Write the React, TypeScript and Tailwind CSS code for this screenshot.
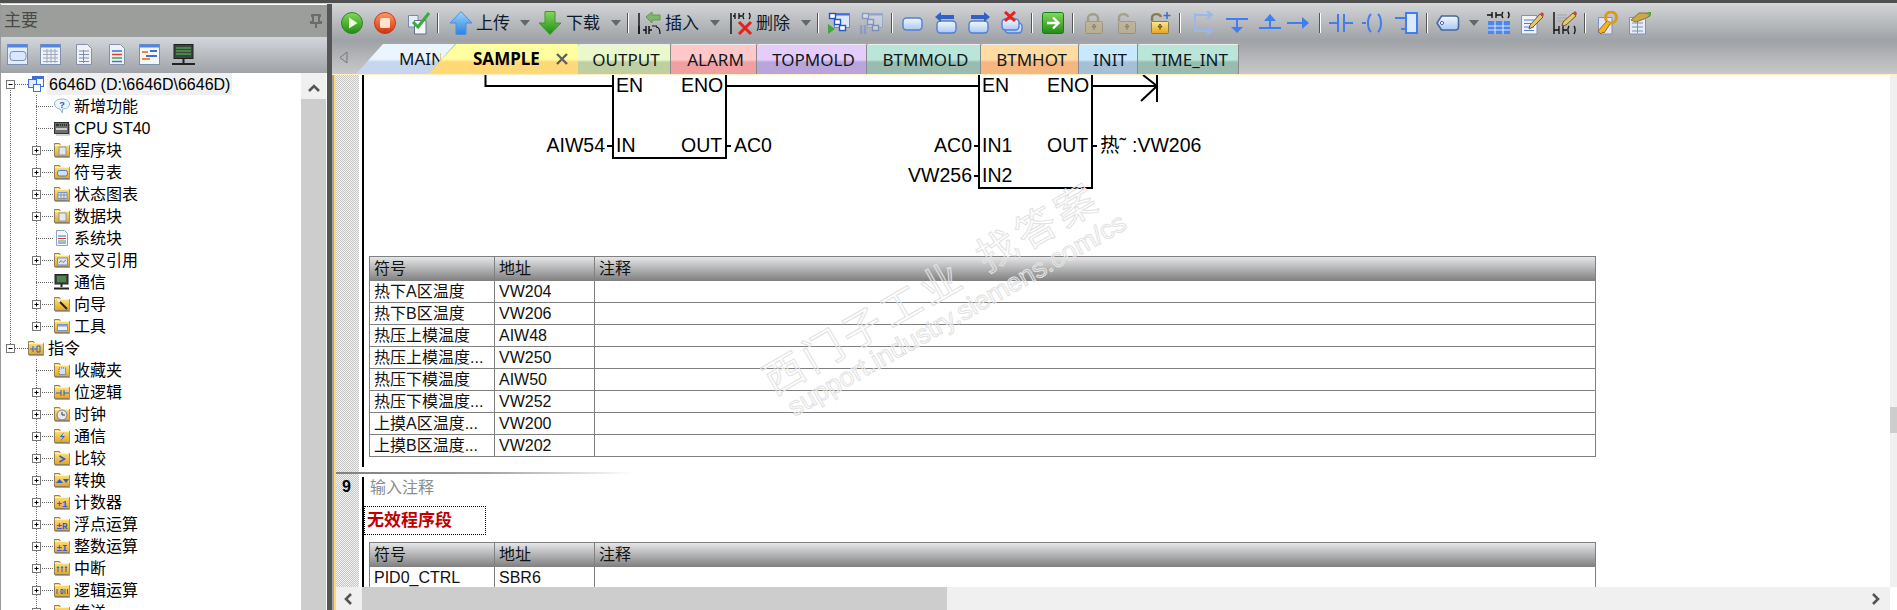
import type { ReactNode } from "react";

// shared svg gradients
function Defs() {
  return (
    <svg className="absolute size-0" aria-hidden="true">
      <defs>
        <linearGradient id="folder" x1="0" y1="0" x2="0" y2="1">
          <stop offset="0" stopColor="#ffe98a" />
          <stop offset="1" stopColor="#e5a51e" />
        </linearGradient>
        <linearGradient id="green" x1="0" y1="0" x2="0" y2="1">
          <stop offset="0" stopColor="#86d65c" />
          <stop offset="1" stopColor="#1f8d14" />
        </linearGradient>
        <linearGradient id="red" x1="0" y1="0" x2="0" y2="1">
          <stop offset="0" stopColor="#ff9a62" />
          <stop offset="1" stopColor="#d5300f" />
        </linearGradient>
        <linearGradient id="blue" x1="0" y1="0" x2="0" y2="1">
          <stop offset="0" stopColor="#9ad6ff" />
          <stop offset="1" stopColor="#2a82e2" />
        </linearGradient>
        <linearGradient id="pale" x1="0" y1="0" x2="0" y2="1">
          <stop offset="0" stopColor="#f3f8ff" />
          <stop offset="1" stopColor="#a9c8f4" />
        </linearGradient>
      </defs>
    </svg>
  );
}

function I({ children, w = 24, h = 24 }: { children: ReactNode; w?: number; h?: number }) {
  return (
    <svg width={w} height={h} viewBox={`0 0 ${w} ${h}`} fill="none" className="shrink-0">
      {children}
    </svg>
  );
}

/* ---------- tree icons ---------- */

function Folder({ children }: { children?: ReactNode }) {
  return (
    <I w={16} h={16}>
      <path d="M0.5 3.5V1.5H5.5L6.5 3.5H15.5V14.5H0.5Z" fill="url(#folder)" stroke="#8d7f5c" />
      <path d="M1 3.5H15" stroke="#fff4c4" />
      <path d="M1 15.5H16V4" stroke="#a8a8a0" />
      {children}
    </I>
  );
}

const glyph = (s: string) => (
  <text x="8" y="12.5" textAnchor="middle" fontSize="9" fontWeight="700" fill="#2b5fd8" fontFamily="Liberation Mono, monospace">
    {s}
  </text>
);

const Doc = () => (
  <I w={16} h={16}>
    <path d="M2.5 0.5H10.5L13.5 3.5V15.5H2.5Z" fill="#f4f7fc" stroke="#8fa3c6" />
    <path d="M4 6H12" stroke="#3d6fd8" />
    <path d="M4 8.5H12" stroke="#e03c30" />
    <path d="M4 11H12" stroke="#46a63c" />
    <path d="M4 13H12" stroke="#3d6fd8" />
  </I>
);

const Monitor = ({ w = 16 }: { w?: number }) => (
  <I w={w} h={16}>
    <rect x="1" y="0.5" width="13" height="9.5" fill="#3c4a40" stroke="#222" />
    <path d="M3 3H12M3 5H12M3 7H12" stroke="#5fc45c" />
    <path d="M7.5 10V13" stroke="#222" strokeWidth="2" />
    <path d="M0 14.5H15" stroke="#222" strokeWidth="2" />
  </I>
);

const tree: { label: string; level: 0 | 1; box?: boolean; icon: ReactNode }[] = [
  {
    label: "6646D (D:\\6646D\\6646D)",
    level: 0,
    box: true,
    icon: (
      <I w={16} h={16}>
        <rect x="4.5" y="0.5" width="11" height="10" fill="#fff" stroke="#3d6fd8" />
        <path d="M5 2H15" stroke="#3d6fd8" strokeWidth="2" />
        <rect x="0.5" y="3.5" width="8" height="8" fill="#e4edfb" stroke="#3d6fd8" />
        <rect x="5.5" y="8.5" width="7" height="7" fill="#fff" stroke="#3d6fd8" />
      </I>
    ),
  },
  {
    label: "新增功能",
    level: 1,
    icon: (
      <I w={16} h={16}>
        <path d="M8 1C3.5 1 0.5 3 0.5 6S3.5 11 6 11L8.5 15V11C12.5 11 15.5 9 15.5 6S12.5 1 8 1Z" fill="#eef6fb" stroke="#8fb8cc" />
        <text x="8" y="9.5" textAnchor="middle" fontSize="9" fontWeight="700" fill="#2b4fc0" fontFamily="Liberation Sans, sans-serif">?</text>
      </I>
    ),
  },
  {
    label: "CPU ST40",
    level: 1,
    icon: (
      <I w={16} h={16}>
        <rect x="0.5" y="2.5" width="14" height="11" fill="#6a6f6c" stroke="#333" />
        <path d="M2 5H13" stroke="#333" strokeWidth="2" />
        <path d="M5 5H12" stroke="#5fd05c" strokeDasharray="1 1" />
        <path d="M2 9H13" stroke="#ccc" strokeWidth="2" />
        <path d="M15.5 4V15H2" stroke="#aaa" />
      </I>
    ),
  },
  { label: "程序块", level: 1, box: true, icon: <Folder><rect x="5" y="5" width="7" height="8" fill="#dfe6f2" stroke="#8a97ad" /></Folder> },
  { label: "符号表", level: 1, box: true, icon: <Folder><rect x="3.5" y="6.5" width="10" height="5.5" rx="2" fill="#cfe0fa" stroke="#4f7bd0" /></Folder> },
  { label: "状态图表", level: 1, box: true, icon: <Folder><path d="M4 6.5H13V12.5H4ZM4 9H13M7 6.5V12.5M10 6.5V12.5" fill="#dfe6f2" stroke="#7f93b8" /></Folder> },
  { label: "数据块", level: 1, box: true, icon: <Folder><rect x="5" y="5" width="7" height="8" fill="#e4ebf6" stroke="#8a97ad" /></Folder> },
  { label: "系统块", level: 1, icon: <Doc /> },
  { label: "交叉引用", level: 1, box: true, icon: <Folder><rect x="3.5" y="6" width="10" height="7" fill="#dce6f8" stroke="#6f8fc8" /><path d="M5 11L7 8.5L9 10.5L12 8" stroke="#d0603c" /></Folder> },
  { label: "通信", level: 1, icon: <Monitor /> },
  { label: "向导", level: 1, box: true, icon: <Folder><path d="M3 3L13 13" stroke="#222" strokeWidth="2" /><path d="M3 3L6 6" stroke="#fff" strokeWidth="2" /></Folder> },
  { label: "工具", level: 1, box: true, icon: <Folder><rect x="3.5" y="6.5" width="10" height="6" fill="#eef2fa" stroke="#7f93b8" /><path d="M4 7.5H13" stroke="#7f9fe0" strokeWidth="2" /></Folder> },
  { label: "指令", level: 0, box: true, icon: <Folder><path d="M2 9H5M5 6V12M9 6V12H12V6H9M9 9H6" stroke="#2b5fd8" /></Folder> },
  { label: "收藏夹", level: 1, icon: <Folder><rect x="5" y="6" width="6.5" height="6.5" fill="#cfe0fa" stroke="#2b5fd8" strokeDasharray="1 1" /></Folder> },
  { label: "位逻辑", level: 1, box: true, icon: <Folder><path d="M2 9H7M7 6V12M10 6V12M10 9H15" stroke="#2b5fd8" /></Folder> },
  { label: "时钟", level: 1, box: true, icon: <Folder><circle cx="8" cy="9" r="5" fill="#e8e8f4" stroke="#7b7b90" /><path d="M8 6V9H11" stroke="#333" /></Folder> },
  { label: "通信", level: 1, box: true, icon: <Folder><path d="M10 4L6 9H9L6 14L11 8H8Z" fill="#2b5fd8" /></Folder> },
  { label: "比较", level: 1, box: true, icon: <Folder><path d="M5.5 6L10.5 9L5.5 12" stroke="#2b5fd8" strokeWidth="1.6" /></Folder> },
  { label: "转换", level: 1, box: true, icon: <Folder><path d="M2 11L5.5 7L9 11ZM9 7H15L12 11Z" fill="#2b5fd8" /></Folder> },
  { label: "计数器", level: 1, box: true, icon: <Folder>{glyph("+1")}</Folder> },
  { label: "浮点运算", level: 1, box: true, icon: <Folder>{glyph("±R")}</Folder> },
  { label: "整数运算", level: 1, box: true, icon: <Folder>{glyph("±I")}</Folder> },
  { label: "中断", level: 1, box: true, icon: <Folder><path d="M4 12V7M8 12V7M12 12V7M3 8L4 6.5L5 8M7 8L8 6.5L9 8M11 8L12 6.5L13 8" stroke="#2b5fd8" /></Folder> },
  { label: "逻辑运算", level: 1, box: true, icon: <Folder><path d="M3 7V12M7 7.5H9V11.5H7ZM11 7V12M13.5 7V12" stroke="#2b5fd8" /></Folder> },
  { label: "传送", level: 1, box: true, icon: <Folder /> },
];

// dotted connectors and the +/- box left of a tree row
function TreeLines({ index, level, box }: { index: number; level: 0 | 1; box?: boolean }) {
  const top = index > 11 ? 0 : index;
  const dots = { stroke: "#666", strokeDasharray: "1 1" };
  if (level === 0) {
    return (
      <svg width={27} height={22} className="shrink-0">
        <path d={index === 0 ? "M9.5 11V22" : "M9.5 0V11"} {...dots} />
        <path d="M14 11.5H27" {...dots} />
        <rect x="5.5" y="7.5" width="8" height="8" fill="#fff" stroke="#777" />
        <path d="M7.5 11.5H11.5" stroke="#000" />
      </svg>
    );
  }
  return (
    <svg width={53} height={22} className="shrink-0">
      {top > 0 && index < 12 && <path d="M9.5 0V22" {...dots} />}
      <path d={index === 11 ? "M35.5 0V11" : "M35.5 0V22"} {...dots} />
      <path d="M35 11.5H53" {...dots} />
      {box && (
        <>
          <rect x="31.5" y="7.5" width="8" height="8" fill="#fff" stroke="#777" />
          <path d="M33.5 11.5H37.5M35.5 9.5V13.5" stroke="#000" />
        </>
      )}
    </svg>
  );
}

function Chevron({ d }: { d: string }) {
  return (
    <svg width="12" height="12" viewBox="0 0 12 12" fill="none">
      <path d={d} stroke="#555" strokeWidth="2.6" />
    </svg>
  );
}

/* ---------- left panel ---------- */

function LeftPanel() {
  return (
    <aside className="flex h-[606px] w-[327px] shrink-0 flex-col border-l border-[#9a9a9a] bg-white">
      <div className="mt-px flex h-[32px] shrink-0 items-center justify-between bg-[#9c9e9b] pl-[3px] pr-[4px] text-[17px] text-[#4a4a48]">
        <span>主要</span>
        <svg width="14" height="16" viewBox="0 0 14 16" fill="none">
          <path d="M3 2H11V3H10V9H12V10H2V9H4V3H3ZM7 10V15" stroke="#6b6d6a" strokeWidth="2" />
        </svg>
      </div>
      <div className="flex h-[36px] shrink-0 items-center gap-[11px] bg-[linear-gradient(#d3d6da,#9fa3a8)] pl-[6px]">
        <I w={22} h={22}>
          <rect x="0.5" y="0.5" width="20" height="20" fill="#e4ecf8" stroke="#7d8fb0" />
          <path d="M1 2H20" stroke="#4f86e8" strokeWidth="3" />
          <rect x="3" y="7.5" width="16" height="9" rx="3" fill="#dbe8fb" stroke="#7590c0" />
        </I>
        <I w={22} h={22}>
          <rect x="0.5" y="0.5" width="20" height="20" fill="#eef2f8" stroke="#7d8fb0" />
          <path d="M1 2H20" stroke="#4f86e8" strokeWidth="3" />
          <path d="M3 7H18M3 10.5H18M3 14H18M3 17.5H18M7 5V19M11 5V19M15 5V19" stroke="#9aa7bd" />
        </I>
        <I w={22} h={22}>
          <path d="M3.5 0.5H14.5L18.5 4.5V20.5H3.5Z" fill="#eef2f8" stroke="#8292ad" />
          <path d="M6 7H16M6 10.5H16M6 14H16M6 17.5H16M10.5 6V19" stroke="#7f8ea8" />
        </I>
        <I w={22} h={22}>
          <path d="M3.5 0.5H14.5L18.5 4.5V20.5H3.5Z" fill="#eef2f8" stroke="#8292ad" />
          <path d="M6 7H16" stroke="#3d6fd8" strokeWidth="1.5" />
          <path d="M6 10.5H16" stroke="#e03c30" strokeWidth="1.5" />
          <path d="M6 14H16" stroke="#46a63c" strokeWidth="1.5" />
          <path d="M6 17.5H16" stroke="#3d6fd8" strokeWidth="1.5" />
        </I>
        <I w={22} h={22}>
          <rect x="0.5" y="0.5" width="20" height="20" fill="#f4f6fa" stroke="#7d8fb0" />
          <path d="M1 2H20" stroke="#4f86e8" strokeWidth="3" />
          <path d="M3 8H9M3 15H11" stroke="#f08a30" strokeWidth="2" />
          <path d="M11 7H18M7 12H18" stroke="#3d6fd8" strokeWidth="2" />
        </I>
        <I w={24} h={22}>
          <rect x="2" y="0.5" width="19" height="14" fill="#38463c" stroke="#1f1f1f" />
          <path d="M4 4H19M4 7H19M4 10H19" stroke="#5fc45c" />
          <path d="M11.5 15V19" stroke="#222" strokeWidth="2" />
          <path d="M0 20H23" stroke="#222" strokeWidth="2" />
        </I>
      </div>
      <div className="flex min-h-0 flex-1">
        <div className="w-[300px] overflow-hidden bg-white text-[16px] leading-[22px] text-black">
          {tree.map((row, i) => (
            <div key={i} className="flex h-[22px] items-center">
              <TreeLines index={i} level={row.level} box={row.box} />
              {row.icon}
              <span className={`h-[22px] whitespace-nowrap pt-px ${i === 0 ? "ml-[3px] bg-[#f0f0f0] px-[2px]" : "ml-[4px]"}`}>
                {row.label}
              </span>
            </div>
          ))}
        </div>
        <div className="flex w-[25px] flex-col bg-[#cdcdcd]">
          <div className="flex h-[26px] items-center justify-center bg-[#f0f0f0] pt-[4px]">
            <Chevron d="M1 9L6 4L11 9" />
          </div>
        </div>
      </div>
    </aside>
  );
}

/* ---------- toolbar icons ---------- */

const Sep = () => (
  <span className="flex h-[20px] w-[8px] shrink-0 justify-center">
    <span className="h-full w-[2px] border-l border-[#555] bg-white" />
  </span>
);

const Slot = ({ children }: { children: ReactNode }) => (
  <span className="flex w-[33px] shrink-0 justify-center">{children}</span>
);

const Caret = ({ className = "" }: { className?: string }) => (
  <svg width="10" height="6" viewBox="0 0 10 6" className={`shrink-0 ${className}`}>
    <path d="M0 0H10L5 6Z" fill="#666" />
  </svg>
);

const Lbl = ({ children, className = "" }: { children: ReactNode; className?: string }) => (
  <span className={`w-[34px] shrink-0 whitespace-nowrap text-[17px] leading-none text-[#0c1a30] ${className}`}>{children}</span>
);

const rect = (x: number, y: number, w = 19, h = 12) => (
  <rect x={x} y={y} width={w} height={h} rx="3.5" fill="url(#pale)" stroke="#4f7fd6" strokeWidth="1.4" />
);

const wire = "#3f7ef0";
const Run = ({ faded }: { faded?: boolean }) => (
  <I>
    <g opacity={faded ? 0.38 : 1}>
      <rect x="7.5" y="2.5" width="15" height="14" fill="#dce8fb" stroke="#5f8be0" />
      <path d="M8 3.5H22" stroke="#3d70dc" strokeWidth="2" />
      <rect x="2.5" y="2.5" width="6" height="5" fill="#fff" stroke="#2556c8" strokeWidth="1.4" />
      <rect x="7.5" y="8.5" width="6" height="5" fill="#fff" stroke="#2556c8" strokeWidth="1.4" />
      <rect x="12.5" y="14.5" width="6" height="5" fill="#fff" stroke="#2556c8" strokeWidth="1.4" />
      {faded ? (
        <path d="M1 14V23M5 14V23" stroke="#4f7fd6" strokeWidth="2.4" />
      ) : (
        <path d="M1 13L8 18L1 23Z" fill="#40a83a" />
      )}
    </g>
  </I>
);

const Lock = ({ open, faded, plus }: { open?: boolean; faded?: boolean; plus?: boolean }) => (
  <I>
    <g opacity={faded ? 0.5 : 1}>
      <path d={open ? "M4 10V7C4 2 12 2 13 6" : "M6 11V7C6 2 16 2 16 7V11"} stroke="#8b7a50" strokeWidth="2.4" />
      <rect x="3.5" y="10.5" width="17" height="12" rx="1" fill={faded ? "#c7b07a" : "url(#folder)"} stroke="#8b7a50" />
      <path d="M12 13L10 16H14ZM12 15V19" stroke="#5a4a20" />
      {plus && <path d="M19 1V8M15.5 4.5H22.5" stroke="#3f6fc8" strokeWidth="1.6" />}
    </g>
  </I>
);

const Ladder = () => (
  <path d="M1 15V23M5 19H8M8 15V23M11 15V23M11 19H14" stroke="#111" strokeWidth="1.4" />
);

function Toolbar() {
  return (
    <div className="flex h-[40px] shrink-0 items-center pb-[2px] pl-[3px]">
      <Slot>
        <I>
          <circle cx="12" cy="12" r="10.5" fill="url(#green)" stroke="#2a8a1e" />
          <path d="M9 6.5L17.5 12L9 17.5Z" fill="#eafbe0" />
        </I>
      </Slot>
      <Slot>
        <I>
          <circle cx="12" cy="12" r="10.5" fill="url(#red)" stroke="#c63a16" />
          <rect x="7" y="7" width="10" height="10" rx="1.5" fill="#ffe2cf" />
        </I>
      </Slot>
      <Slot>
        <I>
          <path d="M2.5 4.5H12V16H2.5Z" fill="#e8eefa" stroke="#7488a8" />
          <path d="M8.5 9.5H20V23H8.5Z" fill="#f4f7fc" stroke="#5f7391" />
          <path d="M7 11L12 16L23 2" stroke="#38ad38" strokeWidth="3" />
        </I>
      </Slot>
      <Sep />

      <span className="ml-[7px] flex w-[24px] shrink-0 justify-center">
        <I>
          <path d="M12 0.5L23 12H17V23.5H7V12H1Z" fill="url(#blue)" stroke="#4a92dc" />
        </I>
      </span>
      <Lbl className="ml-[3px]">上传</Lbl>
      <Caret className="ml-[10px]" />

      <span className="ml-[8px] flex w-[24px] shrink-0 justify-center">
        <I>
          <path d="M12 23.5L23 12H17V0.5H7V12H1Z" fill="url(#green)" stroke="#3a9a2a" />
        </I>
      </span>
      <Lbl className="ml-[4px]">下载</Lbl>
      <Caret className="ml-[11px]" />
      <span className="ml-[3px]"><Sep /></span>

      <span className="ml-[6px] flex w-[24px] shrink-0 justify-center">
        <I>
          <path d="M1 2V23" stroke="#222" strokeWidth="1.6" />
          <Ladder />
          <path d="M19 15H14M18 16C20 16 22 18 22 23" stroke="#111" strokeWidth="1.2" />
          <path d="M8 6L14 1V4H22V9H14V12Z" fill="#7fb86a" stroke="#5f9a50" />
        </I>
      </span>
      <Lbl className="ml-[3px]">插入</Lbl>
      <Caret className="ml-[11px]" />

      <span className="ml-[10px] flex w-[24px] shrink-0 justify-center">
        <I>
          <path d="M1 2V23" stroke="#222" strokeWidth="1.6" />
          <path d="M5 2V8M9 2V8M5 5H3M9 5H12M14 2C12.5 4 12.5 6 14 8M19 2C20.5 4 20.5 6 19 8" stroke="#111" strokeWidth="1.3" />
          <path d="M9 11L21 23M21 11L9 23" stroke="#e8201c" strokeWidth="3" />
        </I>
      </span>
      <Lbl className="ml-[2px]">删除</Lbl>
      <Caret className="ml-[11px]" />
      <span className="ml-[3px]"><Sep /></span>

      <Slot><Run /></Slot>
      <Slot><Run faded /></Slot>
      <Sep />

      <Slot><I>{rect(2, 7)}</I></Slot>
      <Slot>
        <I>
          {rect(3, 10)}
          <path d="M1 6L7 1V4H20V8H7V11Z" fill="#2f62c4" />
        </I>
      </Slot>
      <Slot>
        <I>
          {rect(2, 10)}
          <path d="M23 6L17 1V4H4V8H17V11Z" fill="#2f62c4" />
        </I>
      </Slot>
      <Slot>
        <I>
          {rect(5, 12, 17, 10)}
          {rect(2, 8, 17, 11)}
          <path d="M5 1L15 10M15 1L5 10" stroke="#e8201c" strokeWidth="3" />
        </I>
      </Slot>
      <Sep />

      <Slot>
        <I>
          <rect x="1.5" y="1.5" width="21" height="21" rx="2" fill="url(#green)" stroke="#118016" />
          <path d="M6 12H17M12 6.5L17.5 12L12 17.5" stroke="#fff" strokeWidth="2.4" />
        </I>
      </Slot>
      <Sep />

      <Slot><Lock faded /></Slot>
      <Slot><Lock open faded /></Slot>
      <Slot><Lock open plus /></Slot>
      <Sep />

      <span className="ml-[3px]" />
      <Slot>
        <I>
          <g stroke="#9ab6ee" strokeWidth="2">
            <path d="M3 2V21M3 4H19M3 20H19" />
            <path d="M15 0L20 4L15 8M15 16L20 20L15 24" />
          </g>
        </I>
      </Slot>
      <Slot>
        <I>
          <path d="M1 8H23M12 8V19" stroke={wire} strokeWidth="2" />
          <path d="M6 16H18L12 22Z" fill={wire} />
        </I>
      </Slot>
      <Slot>
        <I>
          <path d="M1 17H23M12 17V8" stroke={wire} strokeWidth="2" />
          <path d="M6 10H18L12 3Z" fill={wire} />
        </I>
      </Slot>
      <span className="flex w-[24px] shrink-0 justify-center">
        <I>
          <path d="M1 12H18" stroke={wire} strokeWidth="2" />
          <path d="M16 6L23 12L16 18Z" fill={wire} />
        </I>
      </span>
      <span className="ml-[6px]"><Sep /></span>

      <Slot>
        <I>
          <path d="M0 12H9M9 3V21M15 3V21M15 12H24" stroke={wire} strokeWidth="2" />
        </I>
      </Slot>
      <Slot>
        <I>
          <path d="M0 12H4M9 3C5 7 5 17 9 21M16 3C20 7 20 17 16 21" stroke={wire} strokeWidth="2" />
        </I>
      </Slot>
      <Slot>
        <I>
          <rect x="11" y="2" width="11" height="20" fill="#dce8fb" stroke={wire} strokeWidth="2" />
          <path d="M0 7H11M6 18H11" stroke={wire} strokeWidth="2" />
        </I>
      </Slot>
      <Sep />

      <Slot>
        <I>
          <path d="M5.5 5H19C21 5 22.5 6.5 22.5 8V16C22.5 18 21 19 19 19H5.5L1 12Z" fill="url(#pale)" stroke="#46689f" strokeWidth="1.6" />
          <circle cx="6" cy="12" r="1.6" fill="#fff" stroke="#46689f" />
        </I>
      </Slot>
      <Caret className="ml-[5px]" />
      <span className="ml-[3px]" />
      <Slot>
        <I>
          <path d="M0 4H5M5 1V7M9 1V7M9 4H14M16 1C14.5 3 14.5 5 16 7M21 1C22.5 3 22.5 5 21 7" stroke="#111" strokeWidth="1.4" />
          <rect x="1" y="10" width="22" height="13" fill="#4f86ec" />
          <path d="M1 15H23M1 19H23M8 10V23M16 10V23" stroke="#dce8fb" />
        </I>
      </Slot>
      <Slot>
        <I>
          <path d="M1.5 4.5H17V23H1.5Z" fill="#eef3fb" stroke="#7f93b4" />
          <path d="M4 9H14M4 12.5H14M4 16H14M4 19.5H14" stroke="#4f7fd6" />
          <path d="M10 14L20 3L23 6L13 16L9 18Z" fill="#e9c86a" stroke="#6a5a30" />
          <path d="M20 3L23 6L24 3L22 1Z" fill="#c9483a" />
        </I>
      </Slot>
      <Slot>
        <I>
          <path d="M1 1V23" stroke="#222" strokeWidth="1.6" />
          <path d="M4 4H14M4 7H14M4 10H12" stroke="#a3a3a3" />
          <path d="M1 19H6M6 15V23M10 15V23M10 19H14M16 15C14.5 17 14.5 21 16 23M21 15C22.5 17 22.5 21 21 23" stroke="#111" strokeWidth="1.3" />
          <path d="M10 11L20 2L23 5L13 14L9 15Z" fill="#e9c86a" stroke="#6a5a30" />
          <path d="M20 2L23 5L24 2L22 0Z" fill="#c9483a" />
        </I>
      </Slot>
      <Sep />

      <span className="ml-[2px] flex w-[31px] shrink-0 justify-center">
        <I>
          <path d="M3.5 6.5H17V23H3.5Z" fill="#dfe7f4" stroke="#7f93b4" />
          <circle cx="16" cy="6.5" r="5.5" fill="none" stroke="#dc9a1c" strokeWidth="3" />
          <path d="M12 10L3 20L6 23L8 21L9 22L15 13" fill="#eeb42c" stroke="#9a6a14" />
        </I>
      </span>
      <Slot>
        <I>
          <path d="M2.5 6.5H18.5V23H2.5Z" fill="#e6edf8" stroke="#7f93b4" />
          <path d="M5 12H16M5 16H16M5 20H16M10.5 9V22" stroke="#7f93b4" />
          <path d="M4 9L12 2H20L23 5L17 8L9 11Z" fill="#c9a84e" stroke="#8a7434" />
          <path d="M20 1L24 1V5Z" fill="#3ea83a" />
        </I>
      </Slot>
    </div>
  );
}

/* ---------- tabs ---------- */

const tabs = [
  { label: "OUTPUT", cls: "w-[93px] bg-[linear-gradient(#e9f9cb_50%,#c0cfa2_60%)]" },
  { label: "ALARM", cls: "w-[86px] bg-[linear-gradient(#ffc9c9_50%,#f0a0a0_60%)]" },
  { label: "TOPMOLD", cls: "w-[110px] bg-[linear-gradient(#e4cdfb_50%,#b9a5dc_60%)]" },
  { label: "BTMMOLD", cls: "w-[114px] bg-[linear-gradient(#b9e6d8_50%,#98bcb0_60%)]" },
  { label: "BTMHOT", cls: "w-[98px] bg-[linear-gradient(#ffdda2_50%,#f5b680_60%)]" },
  { label: "INIT", cls: "w-[59px] bg-[linear-gradient(#c8e9fd_50%,#a4bfd6_60%)]" },
  { label: "TIME_INT", cls: "w-[101px] bg-[linear-gradient(#b9e6d8_50%,#98bcb0_60%)]" },
];

function Tabs() {
  return (
    <div className="flex h-[30px] shrink-0 items-stretch pl-[7px] font-['Noto_Sans','Liberation_Sans',sans-serif] text-[17px] text-[#101820]">
      <span className="flex w-[17px] shrink-0 items-center pb-[4px]">
        <svg width="9" height="13" viewBox="0 0 9 13" fill="none">
          <path d="M8 1V12L1 6.5Z" fill="#b3b5b8" stroke="#777" />
        </svg>
      </span>
      <div className="flex w-[99px] shrink-0 items-center bg-[linear-gradient(#eaf5fe_50%,#c7d6ef_60%)] pl-[43px] [clip-path:polygon(27px_0,100%_0,72px_100%,0_100%)]">
        <span className="w-[42px] overflow-hidden">MAIN</span>
      </div>
      <div className="z-10 -ml-[27px] flex w-[150px] shrink-0 items-center justify-between bg-[linear-gradient(#ffffa0_50%,#ffd877_60%)] pl-[45px] pr-[10px] [clip-path:polygon(28px_0,100%_0,100%_100%,0_100%)]">
        <span className="font-bold text-black">SAMPLE</span>
        <svg width="12" height="12" viewBox="0 0 12 12" fill="none">
          <path d="M1 1L11 11M11 1L1 11" stroke="#5f5f5f" strokeWidth="2.4" />
        </svg>
      </div>
      {tabs.map((t) => (
        <div
          key={t.label}
          className={`flex shrink-0 items-center justify-center rounded-t-[2px] border-r border-t border-r-[#8a8a8a] border-t-[#eeeeee] pl-[4px] ${t.cls}`}
        >
          {t.label}
        </div>
      ))}
    </div>
  );
}

/* ---------- ladder network ---------- */

function Pin({ x, y, anchor, children }: { x: number; y: number; anchor?: "end"; children: ReactNode }) {
  return (
    <text x={x} y={y} textAnchor={anchor} fontSize="19.5" fill="#000" fontFamily="Liberation Sans, Noto Sans CJK SC, sans-serif">
      {children}
    </text>
  );
}

function Ladder8() {
  return (
    <svg width={900} height={181} viewBox="364 75 900 181" fill="none" className="block">
      <g stroke="#000" strokeWidth="2">
        <path d="M485.5 75V86H613" />
        <path d="M613 75V158H726V75" />
        <path d="M726 86H979" />
        <path d="M979 75V188H1092V75" />
        <path d="M1092 86H1157M1157 75V102M1141 101L1157 86M1143 75L1157 86" />
        <path d="M607 146H613M726 146H731M974 146H979M974 176H979M1092 146H1097" />
      </g>
      <Pin x={616} y={92}>EN</Pin>
      <Pin x={681} y={92}>ENO</Pin>
      <Pin x={605} y={152} anchor="end">AIW54</Pin>
      <Pin x={616} y={152}>IN</Pin>
      <Pin x={681} y={152}>OUT</Pin>
      <Pin x={734} y={152}>AC0</Pin>
      <Pin x={982} y={92}>EN</Pin>
      <Pin x={1047} y={92}>ENO</Pin>
      <Pin x={972} y={152} anchor="end">AC0</Pin>
      <Pin x={982} y={152}>IN1</Pin>
      <Pin x={1047} y={152}>OUT</Pin>
      <Pin x={1100} y={152}>热˜<tspan dx="6">:VW206</tspan></Pin>
      <Pin x={972} y={182} anchor="end">VW256</Pin>
      <Pin x={982} y={182}>IN2</Pin>
    </svg>
  );
}

function SymbolTable({ rows, open }: { rows: [string, string][]; open?: boolean }) {
  return (
    <div className={`ml-[5px] w-[1227px] border-x border-t border-[#808080] text-[16px] leading-[22px] text-[#111] ${open ? "" : "border-b-0"}`}>
      <div className="grid h-[24px] grid-cols-[125px_100px_1fr] bg-[linear-gradient(#e5e6e8,#7f7f7f)]">
        {["符号", "地址", "注释"].map((h, i) => (
          <span key={h} className={`pl-[4px] leading-[24px] ${i < 2 ? "border-r border-[#808080]" : ""}`}>
            {h}
          </span>
        ))}
      </div>
      {rows.map(([sym, addr]) => (
        <div key={sym} className={`grid h-[22px] grid-cols-[125px_100px_1fr] ${open ? "" : "border-b border-[#808080]"}`}>
          <span className="whitespace-nowrap border-r border-[#808080] pl-[4px]">{sym}</span>
          <span className="border-r border-[#808080] pl-[4px]">{addr}</span>
          <span />
        </div>
      ))}
    </div>
  );
}

const rows8: [string, string][] = [
  ["热下A区温度", "VW204"],
  ["热下B区温度", "VW206"],
  ["热压上模温度", "AIW48"],
  ["热压上模温度...", "VW250"],
  ["热压下模温度", "AIW50"],
  ["热压下模温度...", "VW252"],
  ["上摸A区温度...", "VW200"],
  ["上摸B区温度...", "VW202"],
];

// gutter with its dither, then the power rail
function Rung({ num, rail, children, className }: { num?: string; rail: string; children: ReactNode; className: string }) {
  return (
    <div className={`flex shrink-0 overflow-hidden ${className}`}>
      <div className="w-[23px] shrink-0 bg-[repeating-conic-gradient(#c4c4c4_0_25%,#f4f4f4_0_50%)] bg-[length:2px_2px] pl-[6px] pt-[3px] text-[16px] font-bold leading-[20px] text-black">
        {num}
      </div>
      <div className="w-[3px] shrink-0" />
      <div className={`w-[2px] shrink-0 bg-black ${rail}`} />
      <div className="min-w-0 flex-1">{children}</div>
    </div>
  );
}

function Watermark() {
  return (
    <svg width={1561} height={512} viewBox="336 75 1561 512" fill="none" className="pointer-events-none absolute left-0 top-0">
      <g stroke="#e2e2e2" strokeWidth="1" fill="#fff" fillOpacity="0.15" fontFamily="Noto Sans CJK SC, sans-serif">
        <text transform="translate(774 396) rotate(-30)" fontSize="40" letterSpacing="5">
          西门子工业<tspan dx="21">找答案</tspan>
        </text>
        <text transform="translate(794 417) rotate(-29.5)" fontSize="26.5" fontFamily="Liberation Sans, sans-serif">
          support.industry.siemens.com/cs
        </text>
      </g>
    </svg>
  );
}

function Editor() {
  return (
    <div className="flex min-h-0 flex-1">
      <div className="flex w-[1554px] shrink-0 flex-col">
        <div className="relative flex-1 overflow-hidden bg-white">
          <Rung rail="h-[392px]" className="h-[397px]">
            <Ladder8 />
            <SymbolTable rows={rows8} />
          </Rung>
          <div className="h-[2px] w-[297px] bg-[linear-gradient(90deg,#808080,#a0a0a0_50%,#ffffff)]" />
          <Rung num="9" rail="mt-[3px] h-[110px]" className="h-[113px]">
            <div className="pl-[6px] pt-[3px] text-[16px] leading-[22px] text-[#8c8c8c]">输入注释</div>
            <div className="mt-[7px] flex h-[29px] w-[122px] items-center border border-dotted border-black pl-[2px] text-[17px] font-bold text-[#c00000]">
              无效程序段
            </div>
            <div className="mt-[7px]">
              <SymbolTable rows={[["PID0_CTRL", "SBR6"]]} open />
            </div>
          </Rung>
          <Watermark />
        </div>
        <div className="flex h-[23px] shrink-0 bg-[#f0f0f0]">
          <div className="flex w-[26px] items-center justify-center">
            <Chevron d="M8 1L3 6L8 11" />
          </div>
          <div className="w-[585px] bg-[#cdcdcd]" />
          <div className="flex flex-1 items-center justify-end pr-[9px]">
            <Chevron d="M4 1L9 6L4 11" />
          </div>
        </div>
      </div>
      <div className="flex h-[512px] flex-1 flex-col bg-[#f0f0f0] pt-[332px]">
        <div className="h-[26px] bg-[#cdcdcd]" />
      </div>
    </div>
  );
}

export default function App() {
  return (
    <div className="h-[610px] w-[1897px] overflow-hidden bg-white font-['Liberation_Sans','Noto_Sans_CJK_SC',sans-serif]">
      <Defs />
      <div className="h-[3px] bg-[#4f4f4f]" />
      <div className="h-px bg-[#d8d8d8]" />
      <div className="flex">
        <LeftPanel />
        <div className="w-[5px] shrink-0 bg-[#555]" />
        <div className="flex h-[606px] min-w-0 flex-1 flex-col">
          <div className="h-[71px] shrink-0 border-b border-[#fff0c4] bg-[linear-gradient(#d2d4d6,#9fa2a6_52%,#c8c9cb)]">
            <Toolbar />
            <Tabs />
          </div>
          <div className="flex min-h-0 flex-1 border-l-2 border-[#a4a4a4]">
            <div className="w-[2px] shrink-0 bg-[#ffd877]" />
            <Editor />
          </div>
        </div>
      </div>
    </div>
  );
}
